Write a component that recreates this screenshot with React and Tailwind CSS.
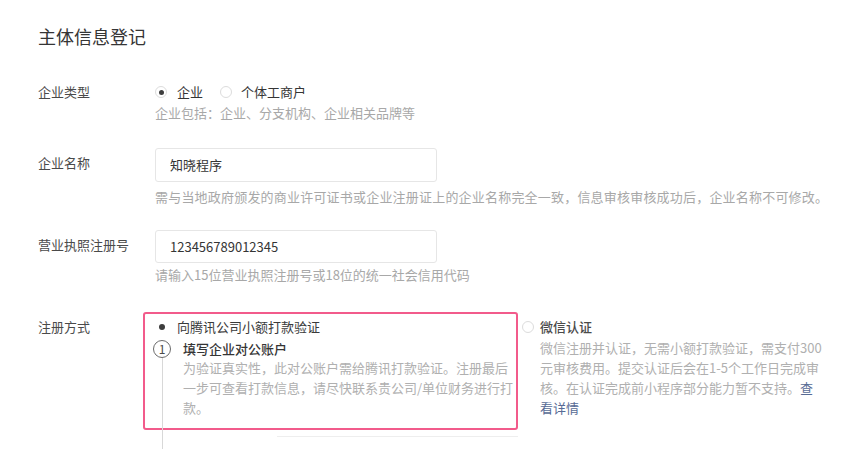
import React from 'react';

const font = { fontFamily: '"Noto Sans CJK SC", "Noto Sans", sans-serif' };

const Radio = ({ checked }) => (
    <span className="w-[12px] h-[12px] rounded-full border border-[#dcdcdc] flex items-center justify-center shrink-0 bg-white">
        {checked && <span className="w-[5px] h-[5px] rounded-full bg-[#3d3d3d]" />}
    </span>
);

const App = () => {
    return (
        <div className="w-[866px] h-[449px] overflow-hidden bg-white pl-[38px] pt-[24px] text-[13px]" style={font}>
            <h1 className="text-[18px] leading-[24px] text-[#353535] font-normal">主体信息登记</h1>

            {/* 企业类型 */}
            <div className="flex mt-[36px]">
                <div className="w-[117px] leading-[16px] text-[#4a4a4a]">企业类型</div>
                <div>
                    <div className="flex items-center h-[16px]">
                        <Radio checked />
                        <span className="ml-[10px] text-[#353535]">企业</span>
                        <span className="ml-[17px]"><Radio /></span>
                        <span className="ml-[9px] text-[#353535]">个体工商户</span>
                    </div>
                    <p className="mt-[4px] leading-[18px] text-[#a8a8a8]">企业包括：企业、分支机构、企业相关品牌等</p>
                </div>
            </div>

            {/* 企业名称 */}
            <div className="flex mt-[26px]">
                <div className="w-[117px] pt-[6px] leading-[18px] text-[#4a4a4a]">企业名称</div>
                <div>
                    <div className="w-[282px] h-[34px] border border-[#e6e6e6] rounded-[3px] flex items-center pl-[14px] text-[#353535]">知晓程序</div>
                    <p className="mt-[6px] leading-[18px] text-[#a8a8a8] whitespace-nowrap tracking-[0.2px]">需与当地政府颁发的商业许可证书或企业注册证上的企业名称完全一致，信息审核审核成功后，企业名称不可修改。</p>
                </div>
            </div>

            {/* 营业执照注册号 */}
            <div className="flex mt-[24px]">
                <div className="w-[117px] pt-[6px] leading-[18px] text-[#4a4a4a]">营业执照注册号</div>
                <div>
                    <div className="w-[282px] h-[33px] border border-[#e6e6e6] rounded-[3px] flex items-center pl-[14px] text-[#353535]">123456789012345</div>
                    <p className="mt-[3px] leading-[18px] text-[#a8a8a8]">请输入15位营业执照注册号或18位的统一社会信用代码</p>
                </div>
            </div>

            {/* 注册方式 */}
            <div className="flex mt-[28px]">
                <div className="w-[105px] pt-[6px] leading-[18px] text-[#4a4a4a]">注册方式</div>
                <div className="relative">
                    <div className="w-[375px] border-2 border-[#f25b8b] rounded-[3px] pt-[4px] pb-[10px] pl-[5px]">
                        <div className="flex items-center h-[18px]">
                            <span className="w-[24px] flex justify-center">
                                <span className="w-[6px] h-[6px] rounded-full bg-[#3d3d3d]" />
                            </span>
                            <span className="ml-[3px] leading-[18px] text-[#3a3a3a]">向腾讯公司小额打款验证</span>
                        </div>
                        <div className="flex mt-[4px]">
                            <span className="w-[24px] flex justify-center">
                                <span className="w-[18px] h-[18px] rounded-full border border-[#6b6b6b] flex items-center justify-center text-[12px] leading-none text-[#4a4a4a] bg-white">1</span>
                            </span>
                            <div className="ml-[9px] w-[332px]">
                                <p className="leading-[18px] font-medium text-[#353535]">填写企业对公账户</p>
                                <p className="leading-[20px] text-[#b0b0b0]">为验证真实性，此对公账户需给腾讯打款验证。注册最后一步可查看打款信息，请尽快联系贵公司/单位财务进行打款。</p>
                            </div>
                        </div>
                    </div>
                    <span className="absolute left-[19px] top-[46px] w-px h-[100px] bg-[#d8d8d8]" />
                    <div className="mt-[6px] ml-[134px] w-[241px] h-px bg-[#eeeeee]" />
                </div>
                <div className="ml-[4px] pt-[5px] flex">
                    <span className="mt-[4px]"><Radio /></span>
                    <div className="ml-[6px] w-[284px]">
                        <p className="leading-[20px] font-medium text-[#4a4a4a]">微信认证</p>
                        <p className="mt-[1px] leading-[20px] text-[#b0b0b0]">
                            微信注册并认证，无需小额打款验证，需支付300元审核费用。提交认证后会在1-5个工作日完成审核。在认证完成前小程序部分能力暂不支持。<span className="text-[#576b95]">查看详情</span>
                        </p>
                    </div>
                </div>
            </div>
        </div>
    );
};

export default App;
